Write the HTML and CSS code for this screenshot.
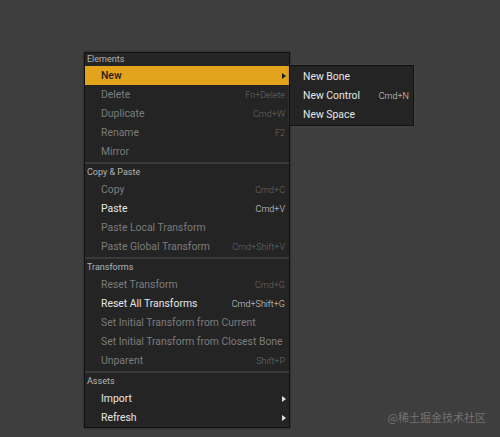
FILE: index.html
```html
<!DOCTYPE html>
<html lang="en">
<head>
    <meta charset="UTF-8">
    <meta name="viewport" content="width=device-width, initial-scale=1.0">
    <title>Context Menu</title>
    <link rel="stylesheet" href="styles.css">
</head>
<body>
    <div class="menu">
        <div class="section">
            <div class="section-title first">Elements</div>
            <div class="item active has-sub">
                <span class="label">New</span>
                <span class="arrow"></span>
                <div class="submenu">
                    <div class="item"><span class="label">New Bone</span></div>
                    <div class="item"><span class="label">New Control</span><span class="key">Cmd+N</span></div>
                    <div class="item"><span class="label">New Space</span></div>
                </div>
            </div>
            <div class="item disabled"><span class="label">Delete</span><span class="key">Fn+Delete</span></div>
            <div class="item disabled"><span class="label">Duplicate</span><span class="key">Cmd+W</span></div>
            <div class="item disabled"><span class="label">Rename</span><span class="key">F2</span></div>
            <div class="item disabled"><span class="label">Mirror</span></div>
        </div>
        <div class="separator"></div>
        <div class="section">
            <div class="section-title">Copy &amp; Paste</div>
            <div class="item disabled"><span class="label">Copy</span><span class="key">Cmd+C</span></div>
            <div class="item"><span class="label">Paste</span><span class="key">Cmd+V</span></div>
            <div class="item disabled"><span class="label">Paste Local Transform</span></div>
            <div class="item disabled"><span class="label">Paste Global Transform</span><span class="key">Cmd+Shift+V</span></div>
        </div>
        <div class="separator"></div>
        <div class="section">
            <div class="section-title">Transforms</div>
            <div class="item disabled"><span class="label">Reset Transform</span><span class="key">Cmd+G</span></div>
            <div class="item"><span class="label">Reset All Transforms</span><span class="key">Cmd+Shift+G</span></div>
            <div class="item disabled"><span class="label">Set Initial Transform from Current</span></div>
            <div class="item disabled"><span class="label">Set Initial Transform from Closest Bone</span></div>
            <div class="item disabled"><span class="label">Unparent</span><span class="key">Shift+P</span></div>
        </div>
        <div class="separator"></div>
        <div class="section">
            <div class="section-title">Assets</div>
            <div class="item has-sub"><span class="label">Import</span><span class="arrow"></span></div>
            <div class="item has-sub"><span class="label">Refresh</span><span class="arrow"></span></div>
        </div>
    </div>

    <div class="watermark">@稀土掘金技术社区</div>
</body>
</html>
```

FILE: styles.css
```css
body {
    margin: 0;
    padding: 52px 0 0 84px;
    height: 437px;
    box-sizing: border-box;
    background-color: #3e3e3e;
    font-family: Roboto, 'Noto Sans', sans-serif;
    overflow: hidden;
    position: relative;
}
.menu {
    width: 204px;
    background-color: #242424;
    border: 1px solid #111;
    box-shadow: 0 0 2px rgba(0, 0, 0, 0.5);
}
.section-title {
    height: 15px;
    line-height: 15px;
    padding-left: 2px;
    font-size: 9px;
    color: #b4b4b4;
}
.section-title.first {
    height: 13px;
    line-height: 13px;
}
.separator {
    height: 2px;
    margin: 1px 0;
    background-color: #3a3a3a;
}
.item {
    position: relative;
    display: flex;
    align-items: center;
    height: 19px;
    padding: 0 4px 0 16px;
    font-size: 10.4px;
    color: #e6e6e6;
}
.item .label {
    flex: 1;
    white-space: nowrap;
}
.item .key {
    font-size: 9px;
    font-weight: 300;
    color: #d8d8d8;
}
.item.disabled {
    color: #7c7c7c;
}
.item.disabled .key {
    color: #6a6a6a;
}
.item.active {
    background-color: #e4a31c;
    color: #1c1c1c;
    font-weight: 500;
}
.arrow {
    width: 0;
    height: 0;
    border-top: 3px solid transparent;
    border-bottom: 3px solid transparent;
    border-left: 4px solid #e0e0e0;
    margin-right: -1px;
}
.item.active > .arrow {
    border-left-color: #1c1c1c;
}
.submenu {
    position: absolute;
    left: 204px;
    top: -1px;
    width: 123px;
    padding: 1px 0;
    background-color: #242424;
    border: 1px solid #111;
    box-shadow: 0 0 2px rgba(90, 90, 90, 0.6);
    font-weight: normal;
}
.submenu .item {
    padding: 0 4px 0 13px;
    color: #e6e6e6;
}
.watermark {
    position: absolute;
    right: 14px;
    bottom: 12px;
    font-family: 'Noto Sans CJK SC', sans-serif;
    font-size: 11px;
    color: #727272;
}
```
